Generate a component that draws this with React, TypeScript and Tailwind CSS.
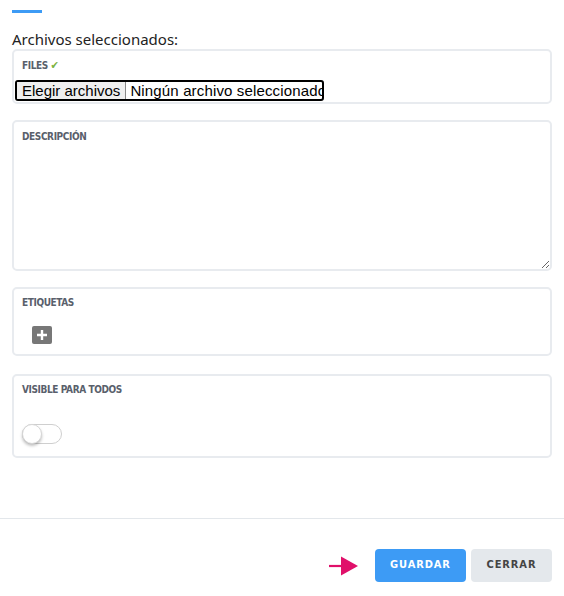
import React, { useState } from 'react';

const labelCls =
  "text-[10px] font-bold uppercase text-[#59606b] tracking-[-0.04em] leading-none [font-family:'DejaVu_Sans_Condensed','Roboto',sans-serif]";

function Field({ label, children, className = '' }: { label: React.ReactNode; children?: React.ReactNode; className?: string }) {
  return (
    <div className={`rounded-[5px] border-2 border-[#e8ebef] bg-white ${className}`}>
      <div className={labelCls}>{label}</div>
      {children}
    </div>
  );
}

export default function App() {
  const [visible, setVisible] = useState(false);

  return (
    <div className="w-[564px] h-[596px] bg-white flex flex-col [font-family:'Noto_Sans',sans-serif]">
      <div className="px-3 flex flex-col">
        <div className="mt-[10px] w-[30px] h-[3px] bg-[#3d9bf5]" />
        <p className="mt-[16px] text-[15px] leading-5 text-[#222]">Archivos seleccionados:</p>

        <Field
          label={<span className="ml-[7px]">FILES <span className="text-[#7cb342] text-[11px]">✔</span></span>}
          className="h-[55px] pt-[9px] px-[1px]"
        >
          <div className="mt-[9px] w-[309px] h-[21px] flex items-stretch rounded-[3px] border-2 border-black overflow-hidden text-[15px] leading-none text-black [font-family:'Liberation_Sans',Arial,sans-serif]">
            <span className="bg-[#efefef] border-r border-[#888] px-[5px] flex items-center whitespace-nowrap">Elegir archivos</span>
            <span className="px-[4px] flex items-center whitespace-nowrap tracking-[0.01em]">Ningún archivo seleccionado</span>
          </div>
        </Field>

        <div className="mt-[16px] relative h-[151px] rounded-[5px] border-2 border-[#e8ebef] bg-white">
          <div className={`${labelCls} absolute left-[8px] top-[10px]`}>DESCRIPCIÓN</div>
          <textarea className="w-full h-full resize-y outline-none pt-[28px] px-[8px] text-sm bg-transparent" />
        </div>

        <Field label="ETIQUETAS" className="mt-[16px] h-[69px] pt-[9px] px-[8px]">
          <button className="mt-[18px] ml-[10px] w-[20px] h-[18px] rounded-[2px] bg-[#777] flex items-center justify-center">
            <svg width="10" height="10" viewBox="0 0 10 10">
              <path d="M5 0v10M0 5h10" stroke="white" strokeWidth="2.4" />
            </svg>
          </button>
        </Field>

        <Field label="VISIBLE PARA TODOS" className="mt-[18px] h-[84px] pt-[9px] px-[8px]">
          <button
            onClick={() => setVisible(!visible)}
            className={`mt-[29px] relative w-[40px] h-[20px] rounded-full border border-[#cfcfcf] ${visible ? 'bg-[#3d9bf5]' : 'bg-white'}`}
          >
            <span
              className={`absolute top-[-1px] w-[20px] h-[20px] rounded-full bg-white border border-[#d6d6d6] shadow-[0_2px_3px_rgba(0,0,0,0.25)] ${visible ? 'left-[19px]' : 'left-[-1px]'}`}
            />
          </button>
        </Field>
      </div>

      <div className="mt-[60px] border-t border-[#e3e7eb]" />

      <div className="mt-[30px] px-3 flex items-center justify-end">
        <svg width="30" height="20" viewBox="0 0 30 20" className="mr-[16px]">
          <path d="M0 10h13" stroke="#e0106a" strokeWidth="2.2" />
          <path d="M12 0.5L29 10L12 19.5Z" fill="#e0106a" />
        </svg>
        <button className="w-[91px] h-[33px] rounded-[4px] bg-[#3d9bf5] text-white text-[11px] font-bold tracking-[0.08em] [font-family:'DejaVu_Sans_Condensed','Roboto',sans-serif]">
          GUARDAR
        </button>
        <button className="ml-[5px] w-[81px] h-[33px] rounded-[4px] bg-[#e4e8ec] text-[#444] text-[11px] font-bold tracking-[0.08em] [font-family:'DejaVu_Sans_Condensed','Roboto',sans-serif]">
          CERRAR
        </button>
      </div>
    </div>
  );
}
